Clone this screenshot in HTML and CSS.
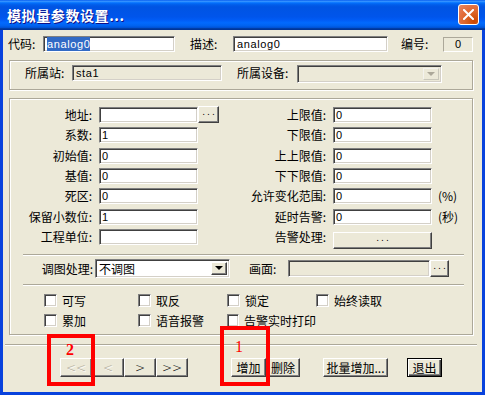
FILE: index.html
```html
<!DOCTYPE html>
<html lang="zh-CN">
<head>
    <meta charset="UTF-8">
    <title>模拟量参数设置...</title>
    <link rel="stylesheet" href="styles.css">
</head>
<body>
    <div class="window">
        <!-- Title bar -->
        <div class="titlebar">
            <span class="title">模拟量参数设置...</span>
            <span class="close">
                <svg width="11" height="11" viewBox="0 0 11 11">
                    <path d="M1 1 L10 10 M10 1 L1 10" stroke="#fff" stroke-width="2" stroke-linecap="square"/>
                </svg>
            </span>
        </div>

        <div class="client">
            <!-- Code / description / number -->
            <div class="row-top">
                <span class="lbl w-code">代码:</span>
                <div class="field w-name mono"><span class="sel">analog0</span></div>
                <span class="lbl w-desc">描述:</span>
                <div class="field w-desc-field mono">analog0</div>
                <span class="lbl w-num">编号:</span>
                <div class="static-box">0</div>
            </div>

            <!-- Station / device -->
            <div class="group group-station">
                <span class="lbl w-sta">所属站:</span>
                <div class="field off w-sta-field mono">sta1</div>
                <span class="lbl w-dev">所属设备:</span>
                <div class="field off combo w-dev-combo">
                    <span class="drop off"><i></i></span>
                </div>
            </div>

            <!-- Parameters -->
            <div class="group group-params">
                <div class="params">
                    <span class="plbl">地址:</span>
                    <div class="pcell"><div class="field pf"></div><div class="btn dots small">...</div></div>
                    <span class="plbl">上限值:</span>
                    <div class="field pf">0</div>
                    <span></span>

                    <span class="plbl">系数:</span>
                    <div class="pcell"><div class="field pf">1</div></div>
                    <span class="plbl">下限值:</span>
                    <div class="field pf">0</div>
                    <span></span>

                    <span class="plbl">初始值:</span>
                    <div class="pcell"><div class="field pf">0</div></div>
                    <span class="plbl">上上限值:</span>
                    <div class="field pf">0</div>
                    <span></span>

                    <span class="plbl">基值:</span>
                    <div class="pcell"><div class="field pf">0</div></div>
                    <span class="plbl">下下限值:</span>
                    <div class="field pf">0</div>
                    <span></span>

                    <span class="plbl">死区:</span>
                    <div class="pcell"><div class="field pf">0</div></div>
                    <span class="plbl">允许变化范围:</span>
                    <div class="field pf">0</div>
                    <span class="unit">(%)</span>

                    <span class="plbl">保留小数位:</span>
                    <div class="pcell"><div class="field pf">1</div></div>
                    <span class="plbl">延时告警:</span>
                    <div class="field pf">0</div>
                    <span class="unit">(秒)</span>

                    <span class="plbl">工程单位:</span>
                    <div class="pcell"><div class="field pf"></div></div>
                    <span class="plbl">告警处理:</span>
                    <div class="btn dots alarm-btn">...</div>
                    <span></span>
                </div>

                <div class="sep inner"></div>

                <div class="row-pic">
                    <span class="lbl w-tune">调图处理:</span>
                    <div class="field combo w-tune-combo cjk">不调图<span class="drop"><i></i></span></div>
                    <span class="lbl w-pic">画面:</span>
                    <div class="field off w-pic-field"></div>
                    <div class="btn dots pic-btn">...</div>
                </div>

                <div class="sep inner second"></div>

                <div class="checks">
                    <label class="chk"><span class="box"></span>可写</label>
                    <label class="chk"><span class="box"></span>取反</label>
                    <label class="chk"><span class="box"></span>锁定</label>
                    <label class="chk"><span class="box"></span>始终读取</label>
                    <label class="chk"><span class="box"></span>累加</label>
                    <label class="chk"><span class="box"></span>语音报警</label>
                    <label class="chk"><span class="box"></span>告警实时打印</label>
                </div>
            </div>

            <div class="sep bottom"></div>

            <!-- Buttons -->
            <div class="buttons">
                <div class="nav">
                    <div class="btn nav-btn disabled">&lt;&lt;</div>
                    <div class="btn nav-btn disabled">&lt;</div>
                    <div class="btn nav-btn">&gt;</div>
                    <div class="btn nav-btn">&gt;&gt;</div>
                </div>
                <div class="btn act add">增加</div>
                <div class="btn act del">删除</div>
                <div class="btn act batch">批量增加...</div>
                <div class="btn act quit default">退出</div>
            </div>
        </div>

        <!-- Annotation marks -->
        <div class="mark mark-1"><span>1</span></div>
        <div class="mark mark-2"><span>2</span></div>
    </div>
</body>
</html>
```

FILE: styles.css
```css
* {
    margin: 0;
    padding: 0;
    box-sizing: border-box;
}

body {
    width: 485px;
    height: 395px;
    overflow: hidden;
    font-family: "Noto Sans CJK SC", sans-serif;
    font-size: 12px;
    color: #000;
    background: #0842dd;
}

.window {
    position: relative;
    width: 485px;
    height: 395px;
    display: flex;
    flex-direction: column;
    background: #0842dd;
}

/* Title bar */
.titlebar {
    height: 30px;
    flex: none;
    display: flex;
    align-items: center;
    justify-content: space-between;
    padding: 0 6px 1px 7px;
    background: linear-gradient(to bottom, #0058ee 0%, #3a93ff 4%, #288eff 6%, #127dff 8%, #036ffc 10%, #0262ee 14%, #0057e5 20%, #0054e3 24%, #0055eb 56%, #005bf5 66%, #026afe 76%, #0062ef 86%, #0052d6 92%, #0040ab 94%, #003092 100%);
}

.title {
    color: #fff;
    font-weight: bold;
    font-size: 14px;
    line-height: 16px;
    letter-spacing: 0.6px;
    text-shadow: 1px 1px #0f1089;
}

.close {
    width: 21px;
    height: 21px;
    display: flex;
    align-items: center;
    justify-content: center;
    border: 1px solid #fff;
    border-radius: 3px;
    background: radial-gradient(circle at 80% 85%, #cc4600 0%, #dc6527 40%, #e26c3a 60%, #e88865 100%);
}

.client {
    flex: 1;
    margin: 0 3px 3px;
    background: #ece9d8;
    padding-top: 6px;
}

.lbl {
    flex: none;
    white-space: nowrap;
    line-height: 16px;
}

/* Sunken fields */
.field {
    flex: none;
    position: relative;
    height: 16px;
    background: #fff;
    border: 1px solid;
    border-color: #808080 #fff #fff #808080;
    box-shadow: inset 1px 1px #404040, inset -1px -1px #d4d0c8;
    padding: 0 2px;
    font-family: "Liberation Sans", sans-serif;
    font-size: 11px;
    line-height: 14px;
    white-space: nowrap;
    overflow: hidden;
}

.field.mono {
    font-size: 11px;
    letter-spacing: 0.6px;
    padding-left: 3px;
}

.field.cjk {
    font-family: "Noto Sans CJK SC", sans-serif;
    font-size: 12px;
}

.field.off {
    background: #ece9d8;
}

.sel {
    background: #316ac5;
    color: #fff;
    padding: 1px 0;
}

.combo {
    height: 18px;
    line-height: 16px;
}

.drop {
    position: absolute;
    top: 2px;
    right: 2px;
    bottom: 2px;
    width: 16px;
    background: #ece9d8;
    border: 1px solid;
    border-color: #fff #404040 #404040 #fff;
    box-shadow: inset -1px -1px #808080;
    display: flex;
    align-items: center;
    justify-content: center;
}

.drop i {
    width: 0;
    height: 0;
    border-left: 4px solid transparent;
    border-right: 4px solid transparent;
    border-top: 4px solid #000;
}

.drop.off {
    border-color: #f4f3ee #c9c7ba #c9c7ba #f4f3ee;
    box-shadow: none;
}

.drop.off i {
    border-top-color: #aca899;
}

/* Raised buttons */
.btn {
    flex: none;
    display: flex;
    align-items: center;
    justify-content: center;
    height: 19px;
    background: #ece9d8;
    border: 1px solid;
    border-color: #fff #404040 #404040 #fff;
    box-shadow: inset -1px -1px #808080;
    font-size: 12px;
    line-height: 16px;
    white-space: nowrap;
}

.btn.dots {
    font-family: "DejaVu Sans", sans-serif;
    font-size: 9px;
    letter-spacing: 2px;
    padding-left: 2px;
    align-items: flex-end;
    padding-bottom: 2px;
}

.btn.disabled {
    color: #aca899;
    text-shadow: 1px 1px #fff;
}

.btn.default {
    border: 1px solid #000;
    box-shadow: inset 1px 1px #fff, inset -1px -1px #404040, inset -2px -2px #808080;
}

/* Top row */
.row-top {
    display: flex;
    align-items: center;
    height: 16px;
    padding-left: 5px;
}

.w-code { width: 35px; }
.w-name { width: 132px; }
.w-desc { width: 43px; margin-left: 15px; }
.w-desc-field { width: 155px; }
.w-num { width: 42px; margin-left: 13px; }

.static-box {
    width: 30px;
    height: 15px;
    border: 1px solid;
    border-color: #aca899 #fff #fff #aca899;
    text-align: center;
    font-family: "Liberation Sans", sans-serif;
    font-size: 11px;
    line-height: 13px;
}

/* Group boxes */
.group {
    margin-left: 6px;
    width: 464px;
    border: 1px solid #aca899;
    box-shadow: inset 1px 1px #fff, 1px 1px #fff;
}

.group-station {
    margin-top: 8px;
    height: 30px;
    display: flex;
    align-items: flex-start;
    padding: 4px 0 0 15px;
}

.w-sta { width: 47px; }
.w-sta-field { width: 150px; }
.w-dev { width: 60px; margin-left: 15px; }
.w-dev-combo { width: 145px; }

.group-params {
    margin-top: 8px;
    height: 237px;
    padding-top: 8px;
}

.params {
    display: grid;
    grid-template-columns: 89px 120px 114px 99px auto;
    grid-auto-rows: 16px;
    row-gap: 4.33px;
}

.plbl {
    text-align: right;
    padding-right: 7px;
    line-height: 16px;
    white-space: nowrap;
}

.pcell {
    display: flex;
}

.pf {
    width: 99px;
}

.btn.small {
    width: 21px;
    height: 17px;
    margin-top: -1px;
}

.alarm-btn {
    width: 99px;
    height: 17px;
    margin-top: 3px;
}

.unit {
    padding-left: 6px;
    line-height: 16px;
}

/* Etched separators */
.sep {
    height: 2px;
    border-top: 1px solid #aca899;
    border-bottom: 1px solid #fff;
}

.sep.inner {
    margin: 9px 8px 0 13px;
}

.sep.inner.second {
    margin-top: 6px;
}

.sep.bottom {
    margin: 9px 5px 0 2px;
}

.row-pic {
    display: flex;
    align-items: flex-start;
    margin-top: 3px;
}

.w-tune {
    width: 85px;
    text-align: right;
    padding-right: 2px;
    line-height: 19px;
}

.w-tune-combo {
    width: 135px;
    height: 19px;
    line-height: 17px;
    padding-left: 3px;
}

.w-pic {
    width: 39px;
    margin-left: 19px;
    line-height: 19px;
}

.w-pic-field {
    width: 142px;
    height: 17px;
    margin-top: 1px;
}

.pic-btn {
    width: 19px;
    height: 17px;
    margin-top: 1px;
}

/* Check boxes */
.checks {
    display: grid;
    grid-template-columns: 94px 89px 89px auto;
    grid-auto-rows: 13px;
    row-gap: 7px;
    margin-top: 8px;
    padding-left: 34px;
}

.chk {
    display: flex;
    align-items: center;
    gap: 5px;
    line-height: 13px;
    white-space: nowrap;
}

.chk .box {
    width: 13px;
    height: 13px;
    background: #fff;
    border: 1px solid;
    border-color: #808080 #fff #fff #808080;
    box-shadow: inset 1px 1px #404040, inset -1px -1px #d4d0c8;
}

/* Bottom buttons */
.buttons {
    display: flex;
    margin-top: 12px;
    padding-left: 57px;
    height: 19px;
}

.nav {
    display: flex;
}

.nav-btn {
    width: 32px;
    font-family: "DejaVu Sans", sans-serif;
    font-size: 12px;
    font-weight: 300;
}

.add { width: 35px; margin-left: 43px; }
.del { width: 34px; }
.batch { width: 65px; margin-left: 23px; }
.quit { width: 35px; margin-left: 19px; }

/* Red annotation marks */
.mark {
    position: absolute;
    border: 4px solid #f00;
}

.mark span {
    position: absolute;
    color: #f00;
    font-family: "Liberation Serif", serif;
    font-weight: bold;
    font-size: 16px;
    line-height: 16px;
}

.mark-1 {
    left: 220px;
    top: 326px;
    width: 50px;
    height: 60px;
}

.mark-1 span {
    left: 11px;
    top: 9px;
    font-weight: normal;
}

.mark-2 {
    left: 47px;
    top: 334px;
    width: 48px;
    height: 52px;
}

.mark-2 span {
    left: 15px;
    top: 4px;
}
```
